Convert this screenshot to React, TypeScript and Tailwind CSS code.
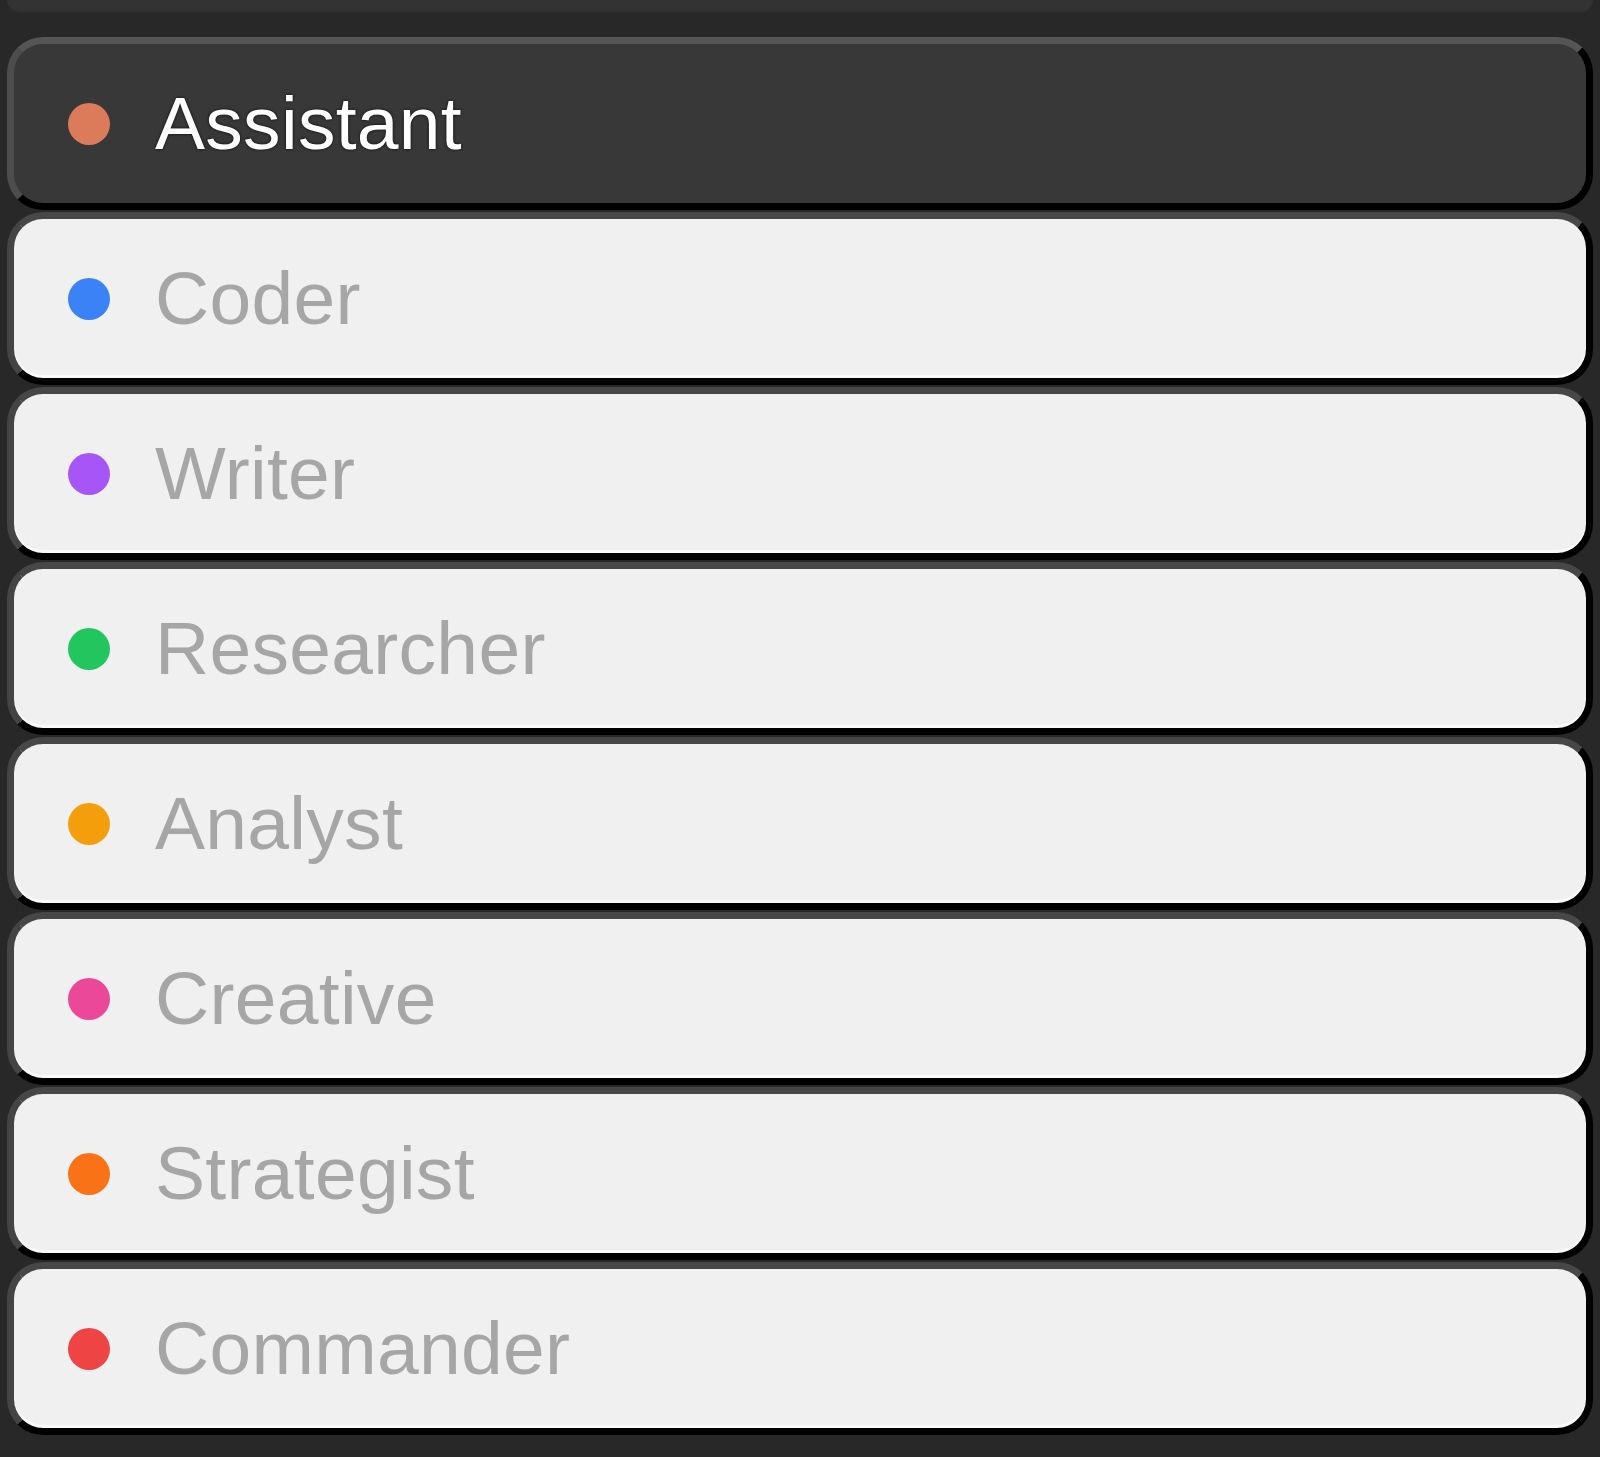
import { useState } from "react";

type Role = {
  name: string;
  dot: string;
};

const roles: Role[] = [
  { name: "Assistant", dot: "bg-[#dc7b5a]" },
  { name: "Coder", dot: "bg-[#3b82f6]" },
  { name: "Writer", dot: "bg-[#a855f7]" },
  { name: "Researcher", dot: "bg-[#22c55e]" },
  { name: "Analyst", dot: "bg-[#f59e0b]" },
  { name: "Creative", dot: "bg-[#ec4899]" },
  { name: "Strategist", dot: "bg-[#f97316]" },
  { name: "Commander", dot: "bg-[#ef4444]" },
];

export default function App() {
  const [active, setActive] = useState("Assistant");

  return (
    <div className="min-h-screen bg-[#282828] px-[7px] font-['Liberation_Sans',Arial,sans-serif]">
      <div className="h-[13px] rounded-b-[30px] border-b-[2px] border-[#2e2e2e] bg-[#333333]" />
      <ul className="mt-[24px] flex flex-col gap-[2px]">
        {roles.map((role) => {
          const isActive = role.name === active;
          return (
            <li key={role.name}>
              <button
                type="button"
                onClick={() => setActive(role.name)}
                className={
                  isActive
                    ? "flex h-[173px] w-full items-center rounded-[36px] border-[7px] border-t-[#555555] border-l-[#4d4d4d] border-r-black border-b-black bg-[#383838] pl-[54px] text-left"
                    : "flex h-[173px] w-full items-center rounded-[36px] border-[7px] border-t-[#474747] border-l-[#444444] border-r-black border-b-black bg-[#f0f0f0] pl-[54px] text-left shadow-[inset_0_-3px_0_#fafafa]"
                }
              >
                <span className={`size-[42px] shrink-0 rounded-full ${role.dot}`} />
                <span
                  className={
                    isActive
                      ? "ml-[45px] text-[75px] leading-none tracking-[0.3px] text-white [text-shadow:0_0_3px_rgba(0,0,0,0.9)]"
                      : "ml-[45px] text-[75px] leading-none tracking-[0.3px] text-[#a6a6a6]"
                  }
                >
                  {role.name}
                </span>
              </button>
            </li>
          );
        })}
      </ul>
    </div>
  );
}
